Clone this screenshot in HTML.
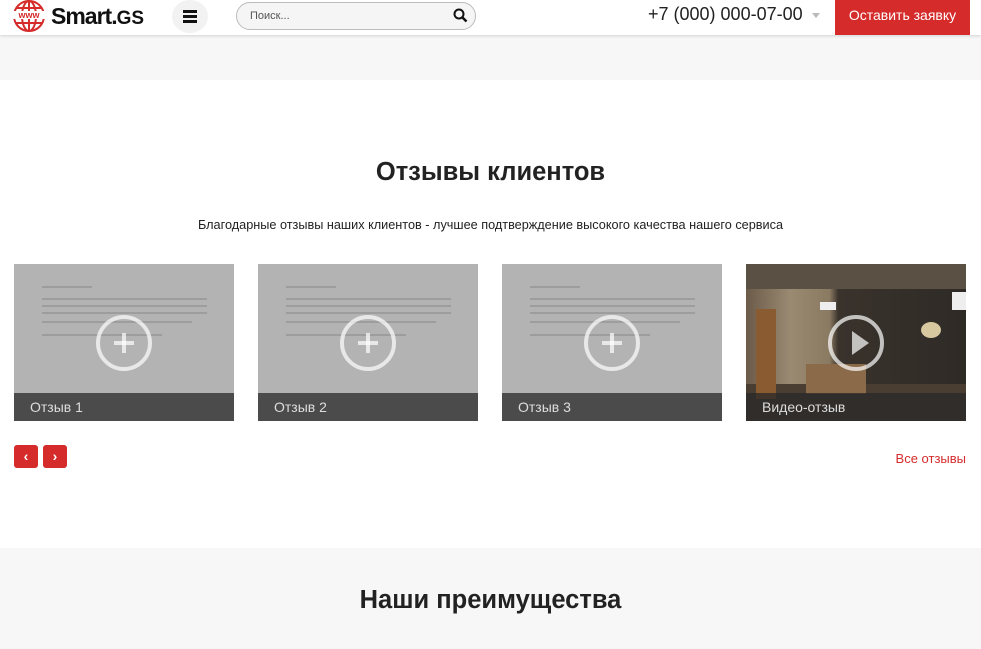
<!DOCTYPE html>
<html><head><meta charset="utf-8"><style>
*{margin:0;padding:0;box-sizing:border-box}
body{width:981px;height:649px;overflow:hidden;font-family:"Liberation Sans",sans-serif;background:#fff;position:relative;color:#222}
.hdr{position:absolute;left:0;top:0;width:981px;height:35px;background:#fff;box-shadow:0 1px 3px rgba(0,0,0,.15);z-index:2}
.band1{position:absolute;top:35px;left:0;width:981px;height:45px;background:#f7f7f7}
.band2{position:absolute;top:548px;left:0;width:981px;height:101px;background:#f7f7f7}
.card{position:absolute;top:264px;width:220px;height:157px;overflow:hidden;background:#b3b3b3}
.cap{position:absolute;left:0;bottom:0;width:100%;height:28px;background:rgba(40,40,40,.75);color:#ddd;font-size:14px;padding:6px 0 0 16px}
.circ{position:absolute;left:82px;top:51px;width:56px;height:56px;border:4px solid rgba(255,255,255,.7);border-radius:50%}
.doc{position:absolute;left:28px;height:2px;background:#888;opacity:.5}
.btn{position:absolute;top:445px;width:24px;height:23px;background:#d52b2b;border-radius:3px;color:#fff;font-size:14px;font-weight:bold;text-align:center;line-height:22px}
</style></head><body>
<div class="hdr">
<svg style="position:absolute;left:11px;top:0" width="36" height="34" viewBox="0 0 36 34"><g fill="none" stroke="#d52b2b" stroke-width="2"><circle cx="18" cy="16" r="15"/><ellipse cx="18" cy="16" rx="7" ry="15"/><line x1="18" y1="1" x2="18" y2="31"/><line x1="4" y1="23" x2="32" y2="23"/><line x1="5" y1="8" x2="31" y2="8"/></g><rect x="1" y="11" width="34" height="8" fill="#fff"/><text x="18" y="18" font-size="9" fill="#d52b2b" text-anchor="middle" font-family="Liberation Sans" font-weight="bold">www</text></svg>
<div style="position:absolute;left:51px;top:3px;font-size:23px;font-weight:bold;letter-spacing:-1px;color:#111">Smart.<span style="font-size:19px;letter-spacing:0">GS</span></div>
<div style="position:absolute;left:172px;top:0;width:36px;height:33px;border-radius:50%;background:#f2f2f2"></div>
<div style="position:absolute;left:183px;top:10px;width:14px;height:2.5px;background:#111;box-shadow:0 5px 0 #111,0 10px 0 #111"></div>
<div style="position:absolute;left:236px;top:2px;width:240px;height:28px;border:1px solid #bbb;border-radius:14px;background:#f5f5f5;font-size:11px;color:#555;padding:7px 0 0 13px">Поиск...</div>
<svg style="position:absolute;left:453px;top:8px" width="15" height="15" viewBox="0 0 15 15"><circle cx="6" cy="6" r="4.5" fill="none" stroke="#111" stroke-width="2"/><line x1="9.5" y1="9.5" x2="13.5" y2="13.5" stroke="#111" stroke-width="2.5"/></svg>
<div style="position:absolute;left:648px;top:4px;font-size:18px;color:#222">+7 (000) 000-07-00</div>
<div style="position:absolute;left:812px;top:13px;border:4px solid transparent;border-top:5px solid #bbb"></div>
<div style="position:absolute;left:835px;top:0;width:135px;height:35px;background:#d52b2b;color:#fff;font-size:14px;text-align:center;line-height:30px">Оставить заявку</div>
</div>
<div class="band1"></div>
<div style="position:absolute;top:158px;width:981px;text-align:center;font-size:25.5px;font-weight:bold;color:#222">Отзывы клиентов</div>
<div style="position:absolute;top:218px;width:981px;text-align:center;font-size:12.7px;color:#222">Благодарные отзывы наших клиентов - лучшее подтверждение высокого качества нашего сервиса</div>

<div class="card" style="left:14px"><div class="doc" style="top:22px;width:50px"></div><div class="doc" style="top:34px;width:165px"></div><div class="doc" style="top:41px;width:165px"></div><div class="doc" style="top:48px;width:165px"></div><div class="doc" style="top:57px;width:150px"></div><div class="doc" style="top:70px;width:120px"></div><div class="circ"></div><div style="position:absolute;left:100px;top:77px;width:20px;height:4px;background:rgba(255,255,255,.7)"></div><div style="position:absolute;left:108px;top:69px;width:4px;height:20px;background:rgba(255,255,255,.7)"></div><div class="cap">Отзыв 1</div></div>
<div class="card" style="left:258px"><div class="doc" style="top:22px;width:50px"></div><div class="doc" style="top:34px;width:165px"></div><div class="doc" style="top:41px;width:165px"></div><div class="doc" style="top:48px;width:165px"></div><div class="doc" style="top:57px;width:150px"></div><div class="doc" style="top:70px;width:120px"></div><div class="circ"></div><div style="position:absolute;left:100px;top:77px;width:20px;height:4px;background:rgba(255,255,255,.7)"></div><div style="position:absolute;left:108px;top:69px;width:4px;height:20px;background:rgba(255,255,255,.7)"></div><div class="cap">Отзыв 2</div></div>
<div class="card" style="left:502px"><div class="doc" style="top:22px;width:50px"></div><div class="doc" style="top:34px;width:165px"></div><div class="doc" style="top:41px;width:165px"></div><div class="doc" style="top:48px;width:165px"></div><div class="doc" style="top:57px;width:150px"></div><div class="doc" style="top:70px;width:120px"></div><div class="circ"></div><div style="position:absolute;left:100px;top:77px;width:20px;height:4px;background:rgba(255,255,255,.7)"></div><div style="position:absolute;left:108px;top:69px;width:4px;height:20px;background:rgba(255,255,255,.7)"></div><div class="cap">Отзыв 3</div></div>
<div class="card" style="left:746px;background:linear-gradient(90deg,#6a5a48 0,#9a8a72 20%,#8a7a62 38%,#3a332c 42%,#2e2a26 100%)">
<div style="position:absolute;left:0;top:0;width:220px;height:25px;background:#5a5044"></div>
<div style="position:absolute;left:0;top:120px;width:220px;height:37px;background:#4a3e32"></div>
<div style="position:absolute;left:60px;top:100px;width:60px;height:30px;background:#8a6a48"></div>
<div style="position:absolute;left:10px;top:45px;width:20px;height:90px;background:#8a5a30"></div>
<div style="position:absolute;left:175px;top:58px;width:20px;height:16px;border-radius:50%;background:#d8c8a0"></div>
<div style="position:absolute;left:74px;top:38px;width:16px;height:8px;background:#eee"></div>
<div style="position:absolute;left:206px;top:28px;width:14px;height:18px;background:#eee"></div>
<div class="circ"></div><svg style="position:absolute;left:104px;top:66px" width="20" height="26"><path d="M2 1 L19 13 L2 25Z" fill="rgba(255,255,255,.7)"/></svg>
<div class="cap">Видео-отзыв</div></div>

<div class="btn" style="left:14px">‹</div>
<div class="btn" style="left:43px">›</div>
<div style="position:absolute;right:15px;top:451px;font-size:13px;color:#d52b2b">Все отзывы</div>
<div class="band2"></div>
<div style="position:absolute;top:586px;width:981px;text-align:center;font-size:25.5px;font-weight:bold;color:#222">Наши преимущества</div>
</body></html>
